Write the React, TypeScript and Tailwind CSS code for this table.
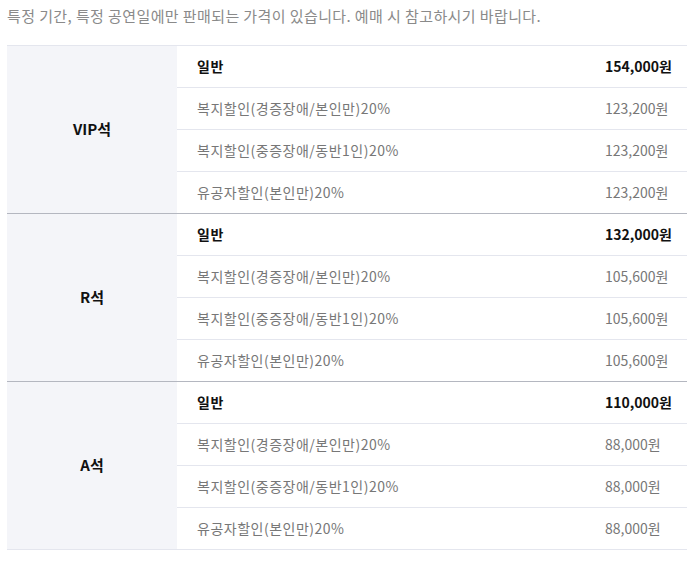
import React from 'react';

interface PriceRow {
  label: string;
  price: string;
}

interface SeatGroup {
  seat: string;
  rows: PriceRow[];
}

const groups: SeatGroup[] = [
  {
    seat: 'VIP석',
    rows: [
      { label: '일반', price: '154,000원' },
      { label: '복지할인(경증장애/본인만)20%', price: '123,200원' },
      { label: '복지할인(중증장애/동반1인)20%', price: '123,200원' },
      { label: '유공자할인(본인만)20%', price: '123,200원' },
    ],
  },
  {
    seat: 'R석',
    rows: [
      { label: '일반', price: '132,000원' },
      { label: '복지할인(경증장애/본인만)20%', price: '105,600원' },
      { label: '복지할인(중증장애/동반1인)20%', price: '105,600원' },
      { label: '유공자할인(본인만)20%', price: '105,600원' },
    ],
  },
  {
    seat: 'A석',
    rows: [
      { label: '일반', price: '110,000원' },
      { label: '복지할인(경증장애/본인만)20%', price: '88,000원' },
      { label: '복지할인(중증장애/동반1인)20%', price: '88,000원' },
      { label: '유공자할인(본인만)20%', price: '88,000원' },
    ],
  },
];

export default function App() {
  return (
    <div
      className="w-[687px] h-[561px] bg-white pl-[7px] pt-[6px]"
      style={{ fontFamily: '"Noto Sans CJK KR", "Noto Sans", sans-serif' }}
    >
      <p className="text-[15px] leading-[20px] text-[#8a8a8a] tracking-[0.4px] whitespace-nowrap">
        특정 기간, 특정 공연일에만 판매되는 가격이 있습니다. 예매 시 참고하시기 바랍니다.
      </p>
      <div className="mt-[19px] border-b border-[#e4e6ee]">
        {groups.map((g, gi) => (
          <div
            key={g.seat}
            className={`flex border-t ${gi === 0 ? 'border-[#e4e6ee]' : 'border-[#b4b7c0]'}`}
          >
            <div className="w-[170px] bg-[#f4f5f9] flex items-center justify-center text-[15px] font-bold text-[#111]">
              {g.seat}
            </div>
            <div className="flex-1">
              {g.rows.map((r, ri) => {
                const bold = ri === 0;
                return (
                  <div
                    key={ri}
                    className={`h-[41px] flex items-center box-content ${ri > 0 ? 'border-t border-[#e4e6ee]' : ''}`}
                  >
                    <span
                      className={`flex-1 pl-[20px] text-[14px] tracking-[0.5px] ${bold ? 'font-bold text-[#111]' : 'text-[#777]'}`}
                    >
                      {r.label}
                    </span>
                    <span
                      className={`w-[82px] text-[14px] ${bold ? 'font-bold text-[#111]' : 'text-[#777]'}`}
                    >
                      {r.price}
                    </span>
                  </div>
                );
              })}
            </div>
          </div>
        ))}
      </div>
    </div>
  );
}
